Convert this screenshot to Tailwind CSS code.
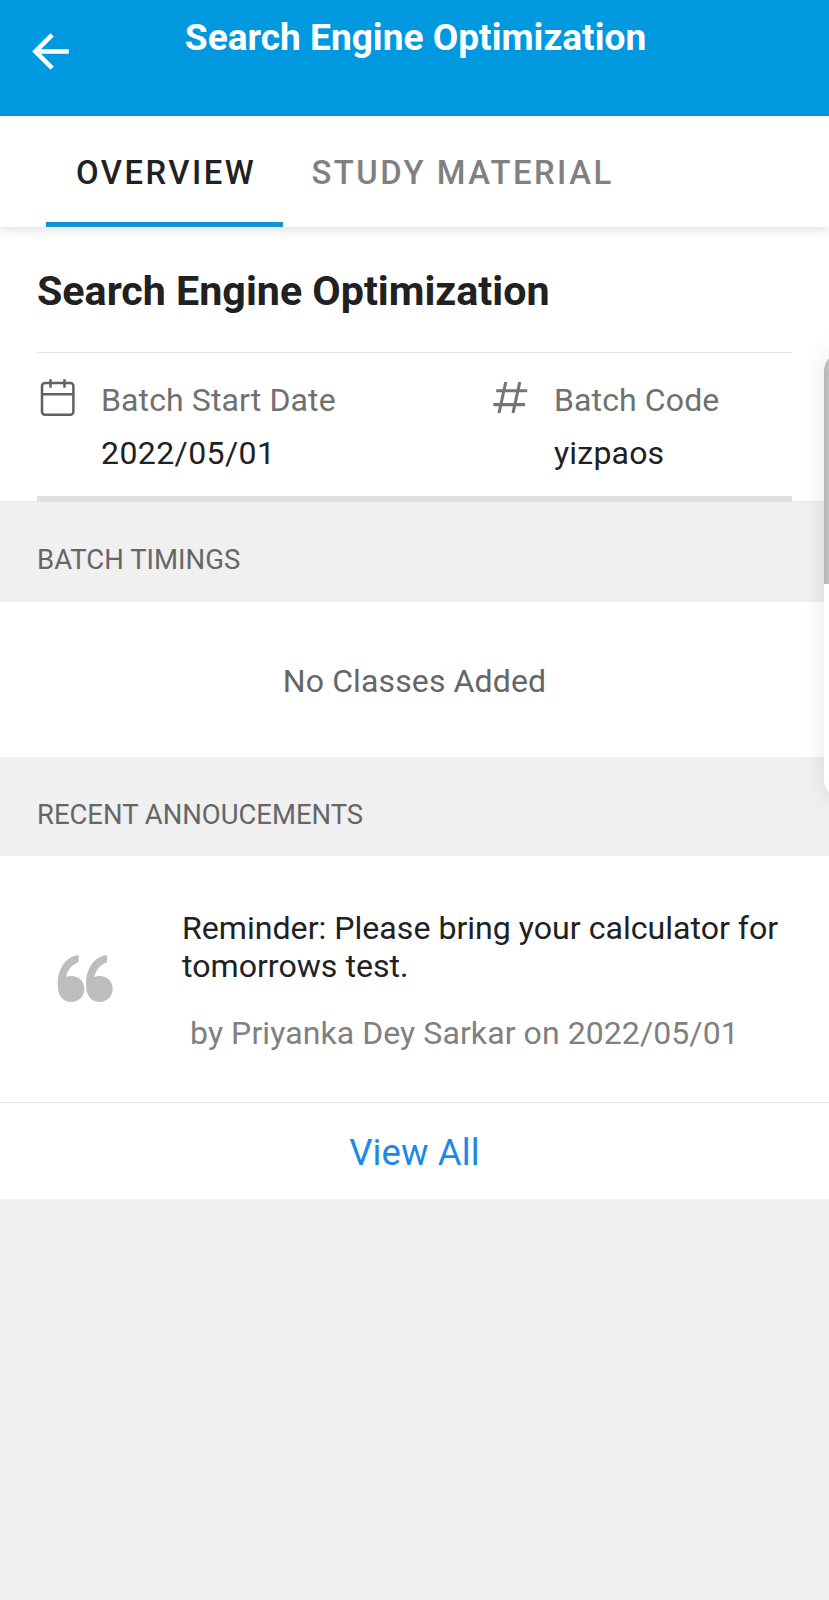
<!DOCTYPE html>
<html lang="en">
<head>
    <meta charset="UTF-8">
    <meta name="viewport" content="width=device-width, initial-scale=1.0">
    <title>Search Engine Optimization</title>
    <!-- Tailwind CSS CDN for styling -->
    <script src="https://cdn.jsdelivr.net/npm/@tailwindcss/browser@4"></script>
</head>
<body class="relative min-h-screen overflow-x-hidden bg-[#f0f0f0] font-['Roboto',sans-serif] text-[#212121]">

    <!-- App bar -->
    <header class="relative z-20 flex h-[116px] items-start bg-[#0099e0] text-white">
        <button class="ml-[23px] mt-6 h-[55px] w-[55px] shrink-0" aria-label="Back">
            <svg class="h-[55px] w-[55px]" viewBox="0 0 24 24" fill="currentColor">
                <path d="M20 11H7.83l5.59-5.59L12 4l-8 8 8 8 1.41-1.41L7.83 13H20v-2z"/>
            </svg>
        </button>
        <h1 class="mr-[76px] grow text-center text-[37.1px] leading-[75px] font-bold whitespace-nowrap">Search Engine Optimization</h1>
    </header>

    <!-- Tabs -->
    <nav class="relative z-10 flex h-[111px] bg-white pl-[46px] text-[32.8px] leading-[115px] font-medium tracking-[2.5px] shadow-[0_1px_12px_rgba(0,0,0,0.16)]">
        <a class="h-full w-[237px] border-b-[5px] border-[#1494cf] pl-[30px]">OVERVIEW</a>
        <a class="ml-[28.5px] h-full text-[#808080]">STUDY MATERIAL</a>
    </nav>

    <main>
        <!-- Batch details -->
        <section class="h-[275px] border-b border-[#e6e6e6] bg-white px-[37px]">
            <h2 class="h-[125px] text-[41.2px] leading-[129px] font-bold">Search Engine Optimization</h2>
            <div class="flex h-[149px] border-t border-b-[5px] border-[#e0e0e0] pt-[26px]">
                <div class="flex w-[453px]">
                    <svg class="mr-6 h-10 w-10 shrink-0" viewBox="0 0 40 40" fill="none" stroke="#616161" stroke-width="2.5">
                        <rect x="5" y="4.1" width="31.4" height="31.6" rx="3"/>
                        <path d="M5 15.3h31.4M13.5 .3v8.4M27.5 .3v8.4"/>
                    </svg>
                    <dl>
                        <dt class="text-[32px] leading-[42px] tracking-[0.12px] text-[#707070]">Batch Start Date</dt>
                        <dd class="mt-[11px] text-[32px] leading-[43px] tracking-[0.4px]">2022/05/01</dd>
                    </dl>
                </div>
                <div class="flex">
                    <svg class="mr-[24px] h-10 w-10 shrink-0" viewBox="0 0 40 40" fill="none" stroke="#757575" stroke-width="3.1">
                        <path d="M6.2 11.8h31M3.4 25.6h31.6M15.8 3l-6.8 31M29.8 3l-6.8 31"/>
                    </svg>
                    <dl>
                        <dt class="text-[32px] leading-[42px] tracking-[0.12px] text-[#707070]">Batch Code</dt>
                        <dd class="mt-[11px] text-[32px] leading-[43px] tracking-[0.2px]">yizpaos</dd>
                    </dl>
                </div>
            </div>
        </section>

        <!-- Batch timings -->
        <h3 class="h-[100px] pl-[37px] text-[27.5px] leading-[116px] text-[#666]">BATCH TIMINGS</h3>
        <section class="h-[155px] bg-white text-center text-[32px] leading-[158px] tracking-[0.12px] text-[#666]">No Classes Added</section>

        <!-- Announcements -->
        <h3 class="h-[99px] pl-[37px] text-[27.45px] leading-[116px] text-[#666]">RECENT ANNOUCEMENTS</h3>
        <section class="bg-white">
            <article class="flex h-[247px] border-b border-[#e0e0e0] pt-[54px]">
                <svg class="mt-[45px] mr-[68px] ml-[57px] h-[47px] w-[57px] shrink-0" viewBox="0 0 171 141" fill="#bdbdbd">
                    <path d="M63 1C28 4 2 40 2 88C2 121 17 141 42 141C65 141 82 124 82 102C82 79 65 63 43 63C37 63 32 64 27 66C31 46 43 29 62 23Q65 22 65 18V4Q65 1 63 1Z"/>
                    <path transform="translate(85 0)" d="M63 1C28 4 2 40 2 88C2 121 17 141 42 141C65 141 82 124 82 102C82 79 65 63 43 63C37 63 32 64 27 66C31 46 43 29 62 23Q65 22 65 18V4Q65 1 63 1Z"/>
                </svg>
                <div>
                    <p class="text-[32.12px] leading-[37.7px]">Reminder: Please bring your calculator for<br>tomorrows test.</p>
                    <p class="mt-7 pl-2 text-[32px] leading-[41px] tracking-[0.08px] text-[#808080]">by Priyanka Dey Sarkar on 2022/05/01</p>
                </div>
            </article>
            <a class="block h-[96px] text-center text-[36.5px] leading-[100px] tracking-[0.15px] text-[#1e88e5]">View All</a>
        </section>
    </main>

    <!-- Edge panel peeking in from the right -->
    <div class="absolute top-[350px] left-[824px] z-20 h-[449px] w-[40px] overflow-hidden rounded-[22px] bg-white"></div>
    <div class="absolute top-[350px] left-[824px] z-20 h-[449px] w-[40px] rounded-[22px] shadow-[0_0_26px_rgba(0,0,0,0.1)]">
        <div class="h-[234px] rounded-tl-[22px] bg-linear-to-r from-[#b4b4b4] to-[#c4c4c4] to-15%"></div>
    </div>
</body>
</html>
